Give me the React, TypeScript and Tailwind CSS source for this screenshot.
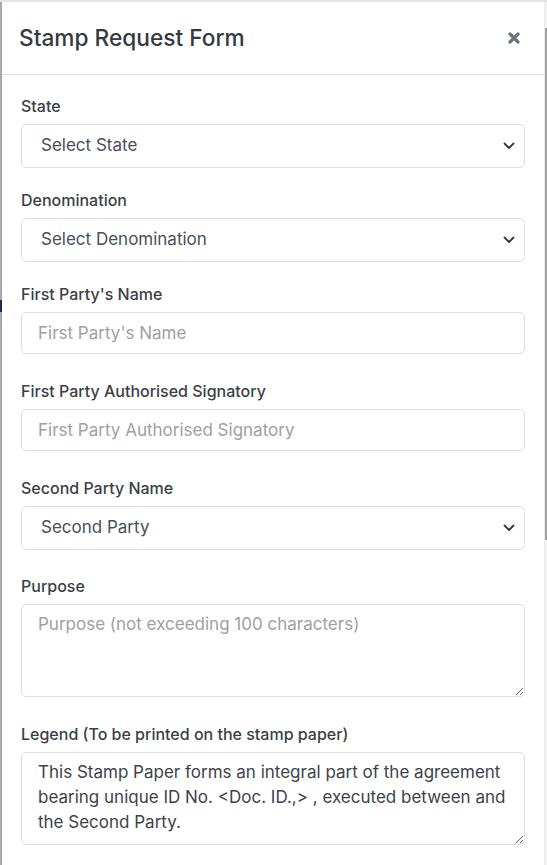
import type { ReactNode } from 'react';

const FONT = { fontFamily: 'Inter, "Noto Sans", sans-serif' };

function Chevron() {
  return (
    <svg width="12" height="8" viewBox="0 0 12 8" className="pointer-events-none">
      <path d="M1.5 1.5 L6 6 L10.5 1.5" fill="none" stroke="#343a40" strokeWidth="1.8" strokeLinecap="round" strokeLinejoin="round" />
    </svg>
  );
}

function Field({ label, mb, children }: { label: string; mb: string; children: ReactNode }) {
  return (
    <div className={mb}>
      <label className="mb-[6px] block h-6 text-[16px] leading-6 font-medium text-[#3a3f45]">{label}</label>
      {children}
    </div>
  );
}

function SelectBox({ value }: { value: string }) {
  return (
    <div className="flex h-[44px] items-center justify-between rounded-[5px] border border-[#dcdee6] bg-white pr-[9px] pl-[19px]">
      <span className="text-[17px] text-[#495057]">{value}</span>
      <Chevron />
    </div>
  );
}

function TextInput({ placeholder }: { placeholder: string }) {
  return (
    <input
      placeholder={placeholder}
      className="block h-[42px] w-full rounded-[5px] border border-[#dcdee6] bg-white px-[16px] text-[17px] text-[#495057] outline-none placeholder:text-[#a0a0a0]"
      style={FONT}
    />
  );
}

export default function App() {
  return (
    <div className="flex h-[865px] w-[547px] flex-col overflow-hidden bg-white" style={FONT}>
      <div className="h-[2px] bg-[#e6e6e6]" />
      <div className="flex flex-1">
        <div className="flex w-[2px] flex-col">
          <div className="h-[298px] bg-[#a9a9a9]" />
          <div className="h-[12px] bg-[#1f2b5c]" />
          <div className="flex-1 bg-[#a9a9a9]" />
        </div>

        <main className="flex flex-1 flex-col bg-white">
          <div className="flex h-[73px] items-center justify-between border-b border-[#dee2e6] pr-[24px] pl-[17px]">
            <h1 className="text-[22.7px] font-medium text-[#343a40]">Stamp Request Form</h1>
            <svg width="12" height="12" viewBox="0 0 12 12">
              <path d="M2 2 L10 10 M10 2 L2 10" stroke="#6c757d" strokeWidth="3.2" strokeLinecap="round" />
            </svg>
          </div>

          <div className="px-[19px] pt-[19px]">
            <Field label="State" mb="mb-[20px]">
              <SelectBox value="Select State" />
            </Field>
            <Field label="Denomination" mb="mb-[20px]">
              <SelectBox value="Select Denomination" />
            </Field>
            <Field label="First Party's Name" mb="mb-[25px]">
              <TextInput placeholder="First Party's Name" />
            </Field>
            <Field label="First Party Authorised Signatory" mb="mb-[25px]">
              <TextInput placeholder="First Party Authorised Signatory" />
            </Field>
            <Field label="Second Party Name" mb="mb-[24px]">
              <SelectBox value="Second Party" />
            </Field>
            <Field label="Purpose" mb="mb-[25px]">
              <textarea
                placeholder="Purpose (not exceeding 100 characters)"
                className="block h-[93px] w-full rounded-[5px] border border-[#dcdee6] bg-white px-[16px] py-[7px] text-[17px] leading-[25px] text-[#495057] outline-none placeholder:text-[#a0a0a0]"
                style={FONT}
              />
            </Field>
            <Field label="Legend (To be printed on the stamp paper)" mb="mb-0">
              <textarea
                defaultValue={'This Stamp Paper forms an integral part of the agreement\nbearing unique ID No. <Doc. ID.,> , executed between and\nthe Second Party.'}
                className="block h-[93px] w-full rounded-[5px] border border-[#dcdee6] bg-white py-[7px] pr-[8px] pl-[16px] text-[17px] leading-[25px] text-[#3d4349] outline-none"
                style={FONT}
              />
            </Field>
          </div>
        </main>

        <div className="w-px bg-[#ececec]" />
        <div className="flex w-[2px] flex-col">
          <div className="h-[26px] bg-[#f2f2f2]" />
          <div className="h-[512px] bg-[#a0a0a0]" />
          <div className="flex-1 bg-[#f2f2f2]" />
        </div>
      </div>
    </div>
  );
}
